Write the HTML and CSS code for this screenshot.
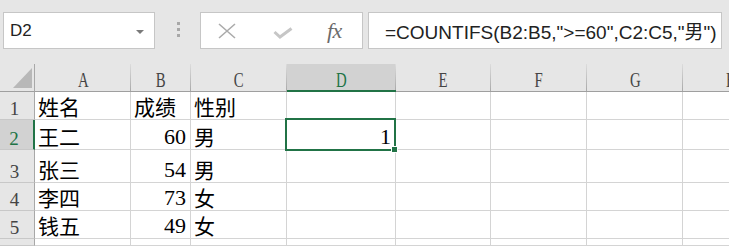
FILE: index.html
```html
<!DOCTYPE html>
<html lang="zh">
<head>
<meta charset="utf-8">
<title>Excel COUNTIFS</title>
<link rel="stylesheet" href="styles.css">
</head>
<body>
<div class="toolbar">
  <div class="namebox"><span class="name">D2</span><span class="caret"></span></div>
  <div class="grip"><i></i><i></i><i></i></div>
  <div class="btns">
    <svg class="ic-x" width="18" height="16" viewBox="0 0 18 16"><path d="M1 1 L17 15 M17 1 L1 15" stroke="#ababab" stroke-width="1.6" fill="none"/></svg>
    <svg class="ic-ok" width="20" height="12" viewBox="0 0 20 12"><polyline points="1.5,5 7,10 18.5,1.5" stroke="#c6c6c6" stroke-width="3" fill="none"/></svg>
    <span class="fx">fx</span>
  </div>
  <div class="formula">=COUNTIFS(B2:B5,"&gt;=60",C2:C5,"男")</div>
</div>
<div class="viewport">
<div class="sheet">
  <div class="corner"><svg width="19" height="20" viewBox="0 0 19 20"><polygon points="19,0 19,20 0,20" fill="#b8b8b8"/></svg></div>
  <div class="ch"><span class="l">A</span></div>
  <div class="ch"><span class="l">B</span></div>
  <div class="ch"><span class="l">C</span></div>
  <div class="ch sel"><span class="l">D</span></div>
  <div class="ch"><span class="l">E</span></div>
  <div class="ch"><span class="l">F</span></div>
  <div class="ch"><span class="l">G</span></div>
  <div class="ch"><span class="l">H</span></div>

  <div class="rh">1</div>
  <div class="c txt">姓名</div>
  <div class="c txt">成绩</div>
  <div class="c txt">性别</div>
  <div class="c"></div><div class="c"></div><div class="c"></div><div class="c"></div><div class="c"></div>

  <div class="rh sel">2</div>
  <div class="c txt">王二</div>
  <div class="c num">60</div>
  <div class="c txt">男</div>
  <div class="c num active">1<div class="selbox"><span class="handle"></span></div></div>
  <div class="c"></div><div class="c"></div><div class="c"></div><div class="c"></div>

  <div class="rh">3</div>
  <div class="c txt">张三</div>
  <div class="c num">54</div>
  <div class="c txt">男</div>
  <div class="c"></div><div class="c"></div><div class="c"></div><div class="c"></div><div class="c"></div>

  <div class="rh">4</div>
  <div class="c txt">李四</div>
  <div class="c num">73</div>
  <div class="c txt">女</div>
  <div class="c"></div><div class="c"></div><div class="c"></div><div class="c"></div><div class="c"></div>

  <div class="rh">5</div>
  <div class="c txt">钱五</div>
  <div class="c num">49</div>
  <div class="c txt">女</div>
  <div class="c"></div><div class="c"></div><div class="c"></div><div class="c"></div><div class="c"></div>

  <div class="rh"></div>
  <div class="c"></div><div class="c"></div><div class="c"></div><div class="c"></div>
  <div class="c"></div><div class="c"></div><div class="c"></div><div class="c"></div>
</div>
</div>
</body>
</html>
```
FILE: styles.css
```css
* { box-sizing: border-box; }
html, body {
  margin: 0;
  padding: 0;
}
body {
  width: 729px;
  height: 246px;
  overflow: hidden;
  background: #e6e6e6;
  font-family: "Liberation Serif", "Noto Sans CJK SC", serif;
}

/* ---------- formula bar ---------- */
.toolbar {
  display: flex;
  align-items: flex-start;
  height: 64px;
  padding-top: 12px;
}
.namebox {
  margin-left: 3px;
  width: 152px;
  height: 37px;
  background: #fff;
  border: 1px solid #c6c6c6;
  display: flex;
  align-items: center;
  justify-content: space-between;
  padding: 0 10px 0 6px;
}
.name {
  font-family: "Liberation Sans", "Noto Sans CJK SC", sans-serif;
  font-size: 17px;
  color: #222;
}
.caret {
  width: 0;
  height: 0;
  border-left: 4px solid transparent;
  border-right: 4px solid transparent;
  border-top: 4px solid #7a7a7a;
  margin-top: 2px;
}
.grip {
  width: 45px;
  height: 37px;
  display: flex;
  flex-direction: column;
  align-items: center;
  gap: 3px;
  padding-top: 10px;
  padding-left: 2px;
}
.grip i {
  display: block;
  width: 3px;
  height: 3px;
  background: #a8a8a8;
}
.btns {
  width: 163px;
  height: 37px;
  background: #fff;
  border: 1px solid #c6c6c6;
  display: flex;
  align-items: center;
  padding-left: 17px;
}
.ic-x { display: block; }
.ic-ok { display: block; margin-left: 37px; margin-top: 5px; }
.fx {
  margin-left: 34px;
  font-family: "Liberation Serif", serif;
  font-style: italic;
  font-size: 22px;
  color: #6b6b6b;
  line-height: 1;
  letter-spacing: -0.5px;
}
.formula {
  margin-left: 5px;
  width: 354px;
  height: 37px;
  background: #fff;
  border: 1px solid #c6c6c6;
  display: flex;
  align-items: center;
  padding-left: 16px;
  white-space: nowrap;
  overflow: hidden;
  font-family: "Liberation Sans", "Noto Sans CJK SC", sans-serif;
  font-size: 19px;
  color: #222;
}

/* ---------- grid ---------- */
.viewport {
  width: 729px;
  height: 182px;
  overflow: hidden;
}
.sheet {
  width: 779px;
  height: 182px;
  display: grid;
  grid-template-columns: 35px 96px 60px 96px 109px 95px 96px 96px 96px;
  grid-template-rows: 28px 28px 30px 33px 28px 28px 1fr;
  background: #fff;
}
.corner {
  background: #e6e6e6;
  border-right: 1px solid #a8a8a8;
  border-bottom: 1px solid #9f9f9f;
  display: flex;
  align-items: flex-end;
  justify-content: flex-end;
  padding: 0 2px 3px 0;
}
.corner svg { display: block; }
.ch {
  background: #e6e6e6 linear-gradient(#dcdcdc, #a9a9a9) right / 1px 100% no-repeat;
  border-bottom: 1px solid #9f9f9f;
  display: flex;
  align-items: flex-end;
  justify-content: center;
  line-height: 18px;
  font-size: 20px;
  color: #444;
  padding-bottom: 2px;
}
.ch .l {
  display: inline-block;
  transform: scaleX(0.74);
}
.ch.sel {
  background-color: #d2d2d2;
  color: #217346;
  border-bottom: 2px solid #217346;
  padding-bottom: 1px;
}
.rh {
  background: #e6e6e6;
  border-right: 1px solid #a8a8a8;
  border-bottom: 1px solid #c8c8c8;
  display: flex;
  align-items: flex-end;
  justify-content: center;
  padding-right: 5px;
  padding-bottom: 1px;
  line-height: 18px;
  font-size: 19px;
  color: #444;
}
.rh.sel {
  background: #d2d2d2;
  color: #217346;
  border-right: 2px solid #217346;
}
.c {
  border-right: 1px solid #d4d4d4;
  border-bottom: 1px solid #d4d4d4;
  display: flex;
  align-items: flex-end;
  padding: 0 4px 3px 4px;
  line-height: 18px;
  font-size: 22px;
  color: #000;
  white-space: nowrap;
}
.txt {
  font-size: 21px;
  padding-left: 3px;
  padding-bottom: 2px;
}
.num {
  justify-content: flex-end;
}
.active {
  position: relative;
}
.selbox {
  position: absolute;
  left: -2px;
  top: -2px;
  width: 111px;
  height: 33px;
  border: 2px solid #217346;
  pointer-events: none;
}
.handle {
  position: absolute;
  right: -4px;
  bottom: -4px;
  width: 7px;
  height: 7px;
  background: #217346;
  border: 1px solid #fff;
}
```
